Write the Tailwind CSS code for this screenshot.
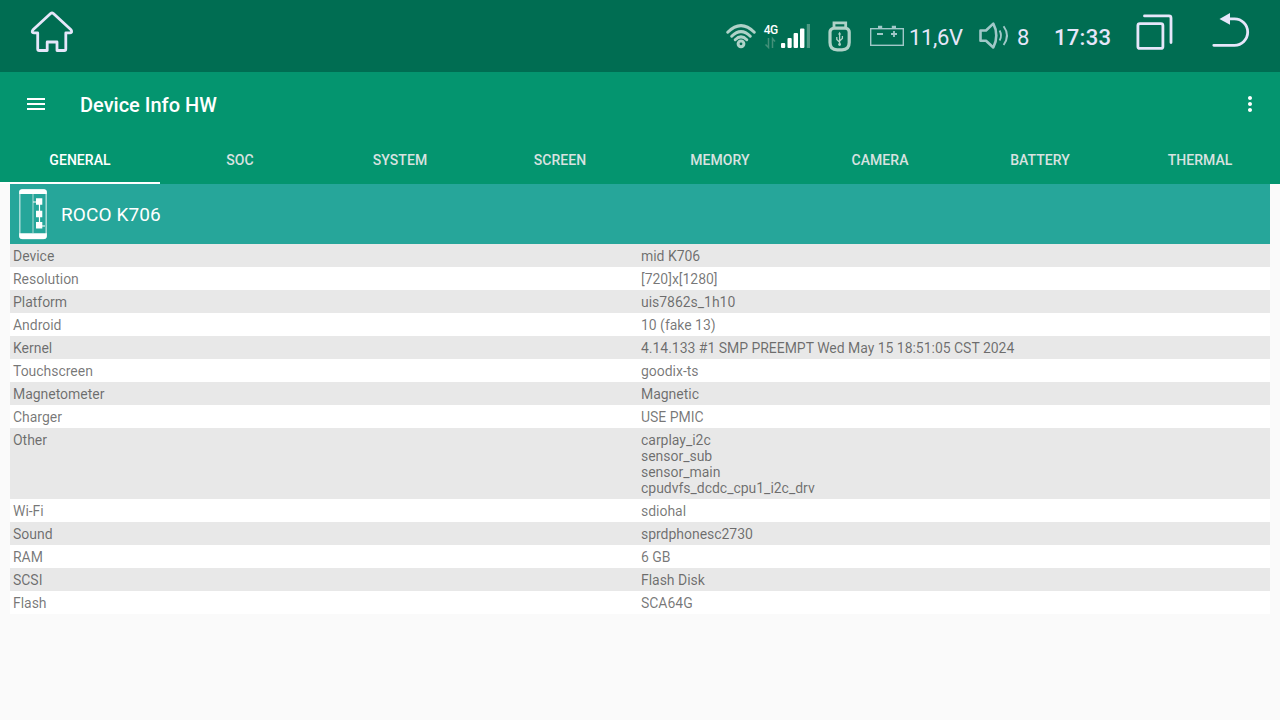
<!DOCTYPE html>
<html lang="en">
<head>
    <meta charset="UTF-8">
    <meta name="viewport" content="width=device-width, initial-scale=1.0">
    <title>Device Info HW</title>
    <script src="https://cdn.jsdelivr.net/npm/@tailwindcss/browser@4"></script>
</head>
<body class="h-screen overflow-hidden bg-[#fafafa] font-['Roboto',sans-serif]">
    <!-- status bar -->
    <div class="flex h-[72px] items-center justify-between bg-[#006d52] text-[#e6e6fa]">
        <svg class="h-[72px] w-20" viewBox="0 0 80 72" fill="none" stroke="currentColor" stroke-width="2.8" stroke-linejoin="round">
            <path d="M50.6 13.5Q52 12.4 53.4 13.5L71 29.8Q72.7 32.6 70 32.9H65.8V49Q65.8 50.5 64.3 50.5H57V42H47.2V50.5H39.2Q37.7 50.5 37.7 49V32.9H34Q31 32.6 33 29.8Z"/>
        </svg>
        <div class="flex items-center text-[22px] leading-[28px]">
            <!-- wifi -->
            <svg class="h-[72px] w-10" viewBox="720 0 40 72" fill="none" stroke="#afd2c8" stroke-width="3" stroke-linecap="round">
                <path d="M727.7 32.2Q741 19 754.3 32.2"/>
                <path d="M731.7 36.2Q741 27 750.3 36.2"/>
                <path d="M735.2 39.7Q741 34 746.8 39.7"/>
                <circle cx="741" cy="43.8" r="2.9"/>
            </svg>
            <!-- mobile signal -->
            <svg class="h-[72px] w-[60px]" viewBox="760 0 60 72" fill="#fff">
                <text x="763.7" y="34" font-size="12" font-weight="500" textLength="14.5">4G</text>
                <path d="M768.5 38V47.5L765.5 44.5M772.5 48V38.5L775 41.5" fill="none" stroke="#439079" stroke-width="1.5"/>
                <rect x="781" y="43" width="4.2" height="5" rx="1"/>
                <rect x="787.5" y="38" width="4.2" height="10" rx="1"/>
                <rect x="793.6" y="33" width="4.4" height="15" rx="1"/>
                <rect x="800" y="28.5" width="4.4" height="19.5" rx="1"/>
                <rect x="806.8" y="24" width="3.2" height="24" fill="#4d9983"/>
            </svg>
            <!-- usb stick -->
            <svg class="h-[72px] w-10" viewBox="820 0 40 72" fill="none" stroke="#afd2c8">
                <path d="M834 28V22.8H845.7V28" stroke-width="2.8"/>
                <path d="M833.5 28.2H846Q849.2 29 849.2 32V42.5Q849.2 49.8 842 49.8H837.2Q830 49.8 830 42.5V32Q830 29 833.5 28.2Z" stroke-width="3.2"/>
                <path d="M839.6 34V44.5M836.8 37V39.5L839.6 42.2M842.4 36V38.5L839.6 41" stroke-width="1.3"/>
                <path d="M838 34.6L839.6 31.8L841.2 34.6Z" fill="#afd2c8" stroke="none"/>
                <circle cx="839.6" cy="44.5" r="1.4" fill="#afd2c8" stroke="none"/>
            </svg>
            <!-- car battery -->
            <svg class="h-[72px] w-12" viewBox="860 0 48 72" fill="none" stroke="#a0c8c8">
                <rect x="870.7" y="28.7" width="32.6" height="16.6" stroke-width="1.4"/>
                <path d="M878 27H882.2M891.8 27H896" stroke-width="2.4"/>
                <path d="M877 34H883M891 34H897M894 31V37" stroke-width="1.8"/>
            </svg>
            <span class="w-16 pt-[3px] pl-px tracking-[-0.35px]">11,6V</span>
            <!-- volume -->
            <svg class="h-[72px] w-10" viewBox="972 0 40 72" fill="none" stroke="#a0c8c8" stroke-width="2.6" stroke-linejoin="round">
                <path d="M980.5 30.5H986L993.3 23.6Q996.3 29 996.3 35.5Q996.3 42 993.3 47.5L986 40.8H980.5Z"/>
                <path d="M999.6 30.5Q1002.4 35.5 999.6 40.5M1003.6 26.3Q1010.4 35.5 1003.6 45" stroke-width="1.9"/>
            </svg>
            <span class="w-[38px] pt-[3px] pl-[5px]">8</span>
            <span class="w-[78px] pt-[3px] pl-[4px] font-medium tracking-[0.3px]">17:33</span>
            <!-- recents -->
            <svg class="h-[72px] w-14" viewBox="1128 0 56 72" fill="none" stroke="currentColor" stroke-width="2.8" stroke-linecap="round">
                <rect x="1137.9" y="23.6" width="25" height="24.8" rx="2"/>
                <path d="M1144.5 15.9H1169Q1171 15.9 1171 17.9V42.5"/>
            </svg>
            <!-- back -->
            <svg class="h-[72px] w-24" viewBox="1184 0 96 72" fill="none" stroke="currentColor" stroke-width="2.8" stroke-linecap="round">
                <path d="M1213.8 45.3H1234.5A13.2 13.2 0 0 0 1234.5 18.9H1228"/>
                <path d="M1219.5 18.9L1230 13V24.8Z" fill="currentColor" stroke="none"/>
            </svg>
        </div>
    </div>

    <!-- app bar -->
    <div class="bg-[#04956f] text-white">
        <div class="flex h-16 items-center">
            <svg class="ml-6 size-6" viewBox="0 0 24 24" fill="currentColor">
                <path d="M3 18h18v-2H3v2zm0-5h18v-2H3v2zm0-7v2h18V6H3z"/>
            </svg>
            <h1 class="ml-8 pt-0.5 text-xl font-medium">Device Info HW</h1>
            <svg class="mr-[18px] ml-auto size-6" viewBox="0 0 24 24" fill="currentColor">
                <path d="M12 8c1.1 0 2-.9 2-2s-.9-2-2-2-2 .9-2 2 .9 2 2 2zm0 2c-1.1 0-2 .9-2 2s.9 2 2 2 2-.9 2-2-.9-2-2-2zm0 6c-1.1 0-2 .9-2 2s.9 2 2 2 2-.9 2-2-.9-2-2-2z"/>
            </svg>
        </div>
        <div class="grid h-12 grid-cols-8 text-center text-sm leading-[48px] font-medium tracking-[0.05px] text-[#d9e2e0]">
            <div class="h-12 border-b-2 border-white text-white">GENERAL</div>
            <div>SOC</div>
            <div>SYSTEM</div>
            <div>SCREEN</div>
            <div>MEMORY</div>
            <div>CAMERA</div>
            <div>BATTERY</div>
            <div>THERMAL</div>
        </div>
    </div>

    <div class="mx-2.5">
        <div class="flex h-[60px] items-center bg-[#26a69a] text-white">
            <svg class="ml-2 h-[52px] w-[30px]" viewBox="18 188 30 52" fill="none" stroke="currentColor">
                <rect x="19.8" y="190" width="26.4" height="48.5" rx="3" stroke="#b4dfdb" stroke-width="1.4"/>
                <path d="M19.2 194V192Q19.2 189.3 22 189.3H44Q46.8 189.3 46.8 192V194ZM19.2 233.3H46.8V236Q46.8 239 44 239H22Q19.2 239 19.2 236Z" fill="currentColor" stroke="none"/>
                <path d="M33 194V233" stroke="#8accc5" stroke-width="1.4"/>
                <path d="M39.5 201V226M33 202H37M41 226H45" stroke-width="1.2"/>
                <path d="M36 198.3h6.3v6.4h-6.3zM36 210.8h6.3v6.4h-6.3zM36 222h6.3v6.5h-6.3z" fill="currentColor" stroke="none"/>
            </svg>
            <span class="ml-[13px] pt-[3px] text-[19px] tracking-[0.1px]">ROCO K706</span>
        </div>
        <div id="rows" class="text-sm leading-4 tracking-[-0.03px] text-black/54"></div>
    </div>

    <script>
        const rows = [
            ['Device', 'mid K706'],
            ['Resolution', '[720]x[1280]'],
            ['Platform', 'uis7862s_1h10'],
            ['Android', '10 (fake 13)'],
            ['Kernel', '4.14.133 #1 SMP PREEMPT Wed May 15 18:51:05 CST 2024'],
            ['Touchscreen', 'goodix-ts'],
            ['Magnetometer', 'Magnetic'],
            ['Charger', 'USE PMIC'],
            ['Other', 'carplay_i2c\nsensor_sub\nsensor_main\ncpudvfs_dcdc_cpu1_i2c_drv'],
            ['Wi-Fi', 'sdiohal'],
            ['Sound', 'sprdphonesc2730'],
            ['RAM', '6 GB'],
            ['SCSI', 'Flash Disk'],
            ['Flash', 'SCA64G']
        ];

        document.getElementById('rows').innerHTML = rows.map(([name, value]) => `
            <div class="flex px-[3px] pt-1 pb-[3px] odd:bg-[#e8e8e8] even:bg-white">
                <div class="w-[628px]">${name}</div>
                <div class="whitespace-pre-line">${value}</div>
            </div>
        `).join('');
    </script>
</body>
</html>
